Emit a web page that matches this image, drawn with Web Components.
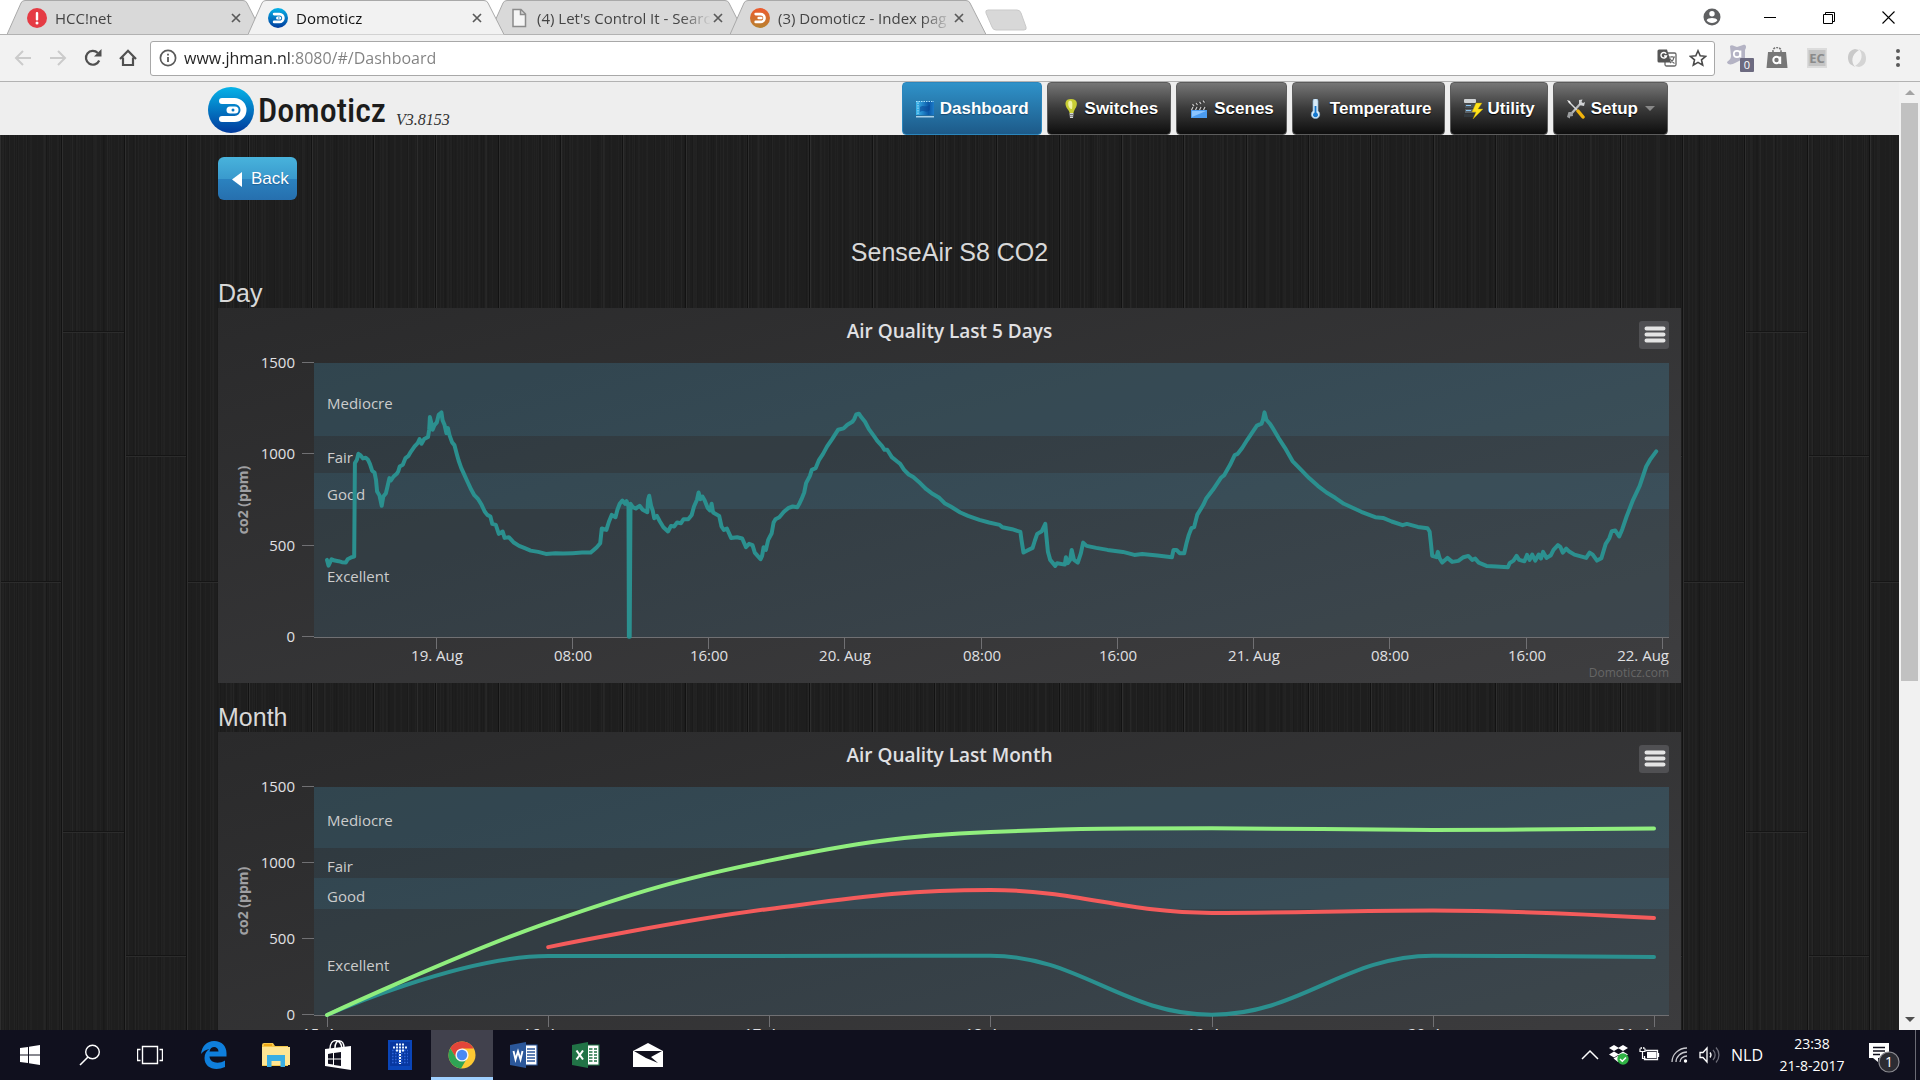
<!DOCTYPE html>
<html lang="en">
<head>
<meta charset="utf-8">
<title>Domoticz</title>
<style>
  html, body { margin: 0; height: 100%; }
  body { font-family: "Liberation Sans", Arial, sans-serif; overflow: hidden; }
</style>
</head>
<body>
<desktop-screen>
  <browser-tabs slot="window">
    <browser-tab icon="alert" label="HCC!net"></browser-tab>
    <browser-tab icon="domoticz" label="Domoticz" active></browser-tab>
    <browser-tab icon="file" label="(4) Let's Control It - Searc"></browser-tab>
    <browser-tab icon="forum" label="(3) Domoticz - Index pag"></browser-tab>
  </browser-tabs>
  <browser-toolbar slot="window" url="www.jhman.nl:8080/#/Dashboard"></browser-toolbar>
  <browser-viewport slot="window">
    <dz-header version="V3.8153">
      <dz-nav-item icon="dashboard" active>Dashboard</dz-nav-item>
      <dz-nav-item icon="bulb">Switches</dz-nav-item>
      <dz-nav-item icon="clapper">Scenes</dz-nav-item>
      <dz-nav-item icon="thermo">Temperature</dz-nav-item>
      <dz-nav-item icon="utility">Utility</dz-nav-item>
      <dz-nav-item icon="tools" menu>Setup</dz-nav-item>
    </dz-header>
    <dz-page heading="SenseAir S8 CO2">
      <dz-section heading="Day"><dz-chart series="day" heading="Air Quality Last 5 Days"></dz-chart></dz-section>
      <dz-section heading="Month"><dz-chart series="month" heading="Air Quality Last Month"></dz-chart></dz-section>
    </dz-page>
  </browser-viewport>
  <task-bar slot="taskbar"></task-bar>
</desktop-screen>

<script>
const UI = '"Open Sans", "Noto Sans", sans-serif';

const ICONS = {
  alert: [20, 20, '<circle cx="10" cy="10" r="10" fill="#e53b44"/><rect x="8.8" y="4" width="2.4" height="8.5" rx="1" fill="#fff"/><circle cx="10" cy="15" r="1.5" fill="#fff"/>'],
  domoticz: [46, 46, '<defs><linearGradient id="g" x2="0" y2="1"><stop stop-color="#06b3e8"/><stop offset="1" stop-color="#013a9c"/></linearGradient></defs><circle cx="23" cy="23" r="23" fill="url(#g)"/><path d="M15 14h9.500a9 9 0 0 1 0 18H15M12 14h6M12 32h6" transform="translate(2 0)" fill="none" stroke="#fff" stroke-width="6" stroke-linecap="round"/><path d="M22 23h5" stroke="#fff" stroke-width="7" stroke-linecap="round"/><circle cx="25" cy="23" r="1.500" fill="#0678c4"/>'],
  forum: [46, 46, '<defs><linearGradient id="g" x2="0" y2="1"><stop stop-color="#ee5a2e"/><stop offset="1" stop-color="#b7822f"/></linearGradient></defs><circle cx="23" cy="23" r="23" fill="url(#g)"/><path d="M13 14h11.500a9 9 0 0 1 0 18H13" fill="none" stroke="#fff" stroke-width="6" stroke-linecap="round"/><path d="M20 23h6" stroke="#fff" stroke-width="6" stroke-linecap="round"/>'],
  file: [20, 20, '<path d="M4 1.500h8l4.500 4.500v12.500H4zM11.500 1.500v5h5" fill="#f5f5f5" stroke="#8b8b8b" stroke-width="1.500"/>'],
  close: [10, 10, '<path d="M1 1l8 8M9 1l-8 8" stroke="#5a5a5a" stroke-width="1.700"/>'],
  user: [18, 18, '<circle cx="9" cy="9" r="8.500" fill="#5f6062"/><circle cx="9" cy="5.800" r="2.700" fill="#fff"/><path d="M3.600 12.300c1-3 9.800-3 10.800 0a6.600 6.600 0 0 1-10.800 0z" fill="#fff"/>'],
  minimize: [13, 13, '<path d="M0 6.500h12" stroke="#000"/>'],
  restore: [13, 13, '<path d="M.5 3.500h9v9h-9zM2.500 3.500v-2h9v9h-2" fill="none" stroke="#000"/>'],
  quit: [13, 13, '<path d="M.5.5l12 12M12.500.5l-12 12" stroke="#000" stroke-width="1.100"/>'],
  back: [18, 18, '<path d="M17 9H2M9 2L2 9l7 7" fill="none" stroke="#cbcbcb" stroke-width="2"/>'],
  forward: [18, 18, '<path d="M1 9h15M9 2l7 7-7 7" fill="none" stroke="#cbcbcb" stroke-width="2"/>'],
  reload: [18, 18, '<path d="M15.200 11.500A6.900 6.900 0 1 1 13.800 4" fill="none" stroke="#505050" stroke-width="2.200"/><path d="M17.500 0v7.500H10z" fill="#505050"/>'],
  home: [18, 18, '<path d="M1 10l8-8.200L17 10M4 8.500V16h10V8.500" fill="none" stroke="#505050" stroke-width="2.200"/>'],
  info: [18, 18, '<circle cx="9" cy="9" r="7.600" fill="none" stroke="#5a5a5a" stroke-width="1.700"/><path d="M9 8v5M9 4.800v1.800" stroke="#5a5a5a" stroke-width="1.800"/>'],
  translate: [20, 20, '<rect x="8" y="5" width="11" height="13" rx="1.500" fill="#fff" stroke="#666" stroke-width="1.300"/><path d="M2 1.500h8l4 13H2a1.500 1.500 0 0 1-1.500-1.500V3A1.500 1.500 0 0 1 2 1.500z" fill="#555"/><path d="M9.200 5.800A2.800 2.800 0 1 0 9.500 8H7" fill="none" stroke="#fff" stroke-width="1.400"/><path d="M12 9h6M15 8v1M17 9c-.5 3-2 5-4 6M13 10.500c1 2 2.500 4 4.500 5" fill="none" stroke="#666" stroke-width="1.100"/>'],
  star: [18, 18, '<path d="M9 1.800l2.200 5 5.400.5-4.100 3.600 1.200 5.300L9 13.400l-4.700 2.800 1.200-5.300L1.400 7.300l5.400-.5z" fill="none" stroke="#4a4a4a" stroke-width="1.600"/>'],
  avast: [28, 28, '<path d="M4 2c2-2 4 0 7 1l6-2c3-1 4 2 2 5l0 8-10 5c-3 2-8 2-8-1 2-2 4-3 4-6z" fill="#b4b3c4"/><circle cx="11" cy="10" r="3.200" fill="none" stroke="#fff" stroke-width="1.700"/><path d="M14.500 6.500v7" stroke="#fff" stroke-width="1.700"/><rect x="14" y="14" width="14" height="14" rx="1" fill="#6c6a80"/><text x="21" y="25" font-size="11" fill="#fff" text-anchor="middle">0</text>'],
  bag: [22, 22, '<path d="M2 5h18l1.500 16H.5z" fill="#777"/><path d="M7 8V3.500a4 3 0 0 1 8 0V8" fill="none" stroke="#777" stroke-width="1.600" stroke-dasharray="2 1"/><circle cx="10.500" cy="13" r="3.200" fill="none" stroke="#fff" stroke-width="2"/><path d="M14.200 9.500v7.500" stroke="#fff" stroke-width="2"/>'],
  ec: [22, 22, '<rect x="1" y="1" width="20" height="20" fill="#dcdcdc"/><rect x="2.500" y="3" width="17" height="16" fill="#c4c4c4"/><text x="11" y="16" font-size="13" font-weight="bold" fill="#8a8a8a" text-anchor="middle">EC</text>'],
  ring: [22, 22, '<path d="M9 2C2 3 0 11 4 17l5 3C5 15 5 8 13 3z" fill="#c9c9c9"/><path d="M13 20c7-1 9-9 5-15l-5-3c4 5 4 12-4 17z" fill="#d4d4d4"/>'],
  dots: [6, 20, '<g fill="#5a5a5a"><circle cx="3" cy="3" r="2"/><circle cx="3" cy="10" r="2"/><circle cx="3" cy="17" r="2"/></g>'],
  dashboard: [20, 20, '<defs><linearGradient id="g" x2="1"><stop stop-color="#3bb8ee"/><stop offset=".7" stop-color="#0b58a8"/><stop offset="1" stop-color="#1d7cc9"/></linearGradient></defs><path d="M1 2h18v14H1z" fill="url(#g)"/><path d="M3 3.500v12M1 2.500h18" stroke="#a8e2f9" stroke-dasharray="1.500 1"/><path d="M1 17h18v1.500H1z" fill="#a9cfe6"/><path d="M5 8c4-3 6 2 10-3v6c-4 4-7-1-10 2z" fill="#0a4a98" opacity=".6"/>'],
  bulb: [20, 20, '<path d="M11 0c7 0 7 6 4 10-1 2-1.500 3-1.500 4h-4c0-1-1-3-2-4C4 5 5 0 11 0z" fill="#c8ce34"/><path d="M9 2c3-1 4 1 3 8-3 1-5-6-3-8z" fill="#f0f3a2"/><path d="M9.500 14h4l-.5 5h-3z" fill="#d5d7d9"/><path d="M9.500 15.500h4M10 17.300h3" stroke="#777"/>'],
  clapper: [20, 20, '<path d="M1 6l15-5 .8 2.200L2 8z" fill="#3a3a3a"/><path d="M3.500 5.200l1.500 2M7 4l1.500 2M10.500 2.800l1.500 2M14 1.700l1.500 2" stroke="#ccc" stroke-width="1.200"/><path d="M2 8h16v3H2z" fill="#333"/><path d="M4 8l-1.500 3M8 8l-1.500 3M12 8l-1.500 3M16 8l-1.500 3" stroke="#ccc" stroke-width="1.200"/><path d="M2 11h16v8H2z" fill="#4b9cf1"/><path d="M3 12h14l-14 6z" fill="#8cc5ff"/>'],
  thermo: [20, 20, '<path d="M8 2a2.500 2.500 0 0 1 5 0v10a4.200 4.200 0 1 1-5 0z" fill="#d9ebf8" stroke="#8ab4d6" stroke-width=".7"/><path d="M9.600 7h1.800v6.500a2.500 2.500 0 1 1-1.800 0z" fill="#1277cf"/>'],
  utility: [20, 20, '<rect x="1" y="0" width="12" height="4" rx="1" fill="#cfd2d4"/><rect x="2" y="5" width="11" height="4" fill="#4a5258"/><rect x="2" y="10" width="11" height="4" fill="#5a6268"/><path d="M3 6.500h5M3 11.500h5" stroke="#8cc5f0"/><rect x="1" y="15" width="10" height="3" fill="#33393d"/><path d="M13 4h6l-4 6h5L10 20l3-7H9z" fill="#ffe21a" stroke="#b99a00" stroke-width=".4"/>'],
  tools: [20, 20, '<path d="M5 15L15 4" stroke="#b8babc" stroke-width="2.200"/><path d="M13 1v5l5 1 1-4-2 1-1.500-1 1-2.500z" fill="#d0d2d4"/><path d="M1 18l1.500-5 4 0 .5 4-3 .5v2z" fill="#9c9ea0"/><path d="M3 3l8 8" stroke="#d7d9da" stroke-width="1.500"/><path d="M1 1l3 1 1 3-2-1z" fill="#eee"/><path d="M12 12l5 6" stroke="#f2b40c" stroke-width="3.500" stroke-linecap="round"/>'],
  burger: [30, 28, '<path d="M7.500 7.500h17M7.500 13.500h17M7.500 19.500h17" stroke="#e4e4e4" stroke-width="4" stroke-linecap="round"/>'],
  windows: [20, 20, '<path d="M0 3l8-1.100V9.500H0zM9 1.700L20 0v9.500H9zM0 10.500h8v7.600L0 17zM9 10.500h11V20L9 18.300z" fill="#fff"/>'],
  search: [22, 22, '<circle cx="13.500" cy="8" r="6.800" fill="none" stroke="#fff" stroke-width="1.400"/><path d="M9 13L1 21" stroke="#fff" stroke-width="1.600"/>'],
  taskview: [26, 20, '<path d="M5.500 1.500h15v17h-15zM3.500 4.500h-3v11h3M22.500 4.500h3v11h-3" fill="none" stroke="#fff" stroke-width="1.400"/>'],
  edge: [26, 28, '<path d="M0 13C1 5 6 0 13 0c8 0 12.500 5.500 12.500 12v3.500H8.500c.5 6.500 9 8 15.500 4V26C14 30.500 3.500 27 3.500 17c0-4 2-7.500 5-9C4.500 8.500 2 10.500 0 13zm8.500-2.500h9c0-5.500-8-6.500-9 0z" fill="#0f7fdc"/>'],
  explorer: [28, 24, '<path d="M0 2a2 2 0 0 1 2-2h9l2 3h13v20H0z" fill="#f6c94b"/><path d="M0 4h28v18H0z" fill="#ffe694"/><path d="M2 1h8v2H2z" fill="#f0a818"/><path d="M5 24V12h18v12h-4.500v-6h-9v6z" fill="#3aaee3"/>'],
  store: [26, 30, '<path d="M0 9l26-3v24L0 26z" fill="#fff"/><path d="M5 9c0-11 11-11 12-1M10 8c0-10 9-9 9 0" fill="none" stroke="#fff" stroke-width="1.500"/><path d="M3 14l5-1v5.500H3zM9 13l7-1v6.500H9zM3 19.500h5v5l-5-.8zM9 19.500h7V26l-7-1z" fill="#10101e"/>'],
  tblue: [24, 30, '<rect width="24" height="30" fill="#0a45b8"/><rect x="2" y="2" width="20" height="24" fill="#0737a0"/><g fill="none" stroke="#2d63d8" stroke-width="1.600" stroke-dasharray="1.600 1.400"><path d="M4 10.500h16M4 13.500h16M4 16.500h16M4 19.500h16M4 22.500h16"/></g><g fill="none" stroke="#e7f3ff" stroke-width="2" stroke-dasharray="2 1"><path d="M8 4.500h8M5 7.500h14M8 10.500h8M12 11v13"/></g>'],
  chrome: [28, 28, '<circle cx="14" cy="14" r="13.500" fill="#fdc933"/><path d="M2.300 7.200A13.500 13.500 0 0 1 25.700 7.500H14L8 17z" fill="#e2453a"/><path d="M2.300 7.200L8.500 17.500 18 19l-5 8.500A13.500 13.500 0 0 1 2.300 7.200z" fill="#2fa455"/><circle cx="14" cy="14" r="6.600" fill="#f4f4f4"/><circle cx="14" cy="14" r="5.200" fill="#4a89f3"/>'],
  word: [28, 26, '<path d="M15 3h12v20H15z" fill="#fff" stroke="#2b579a" stroke-width="1.200"/><path d="M17 7h8M17 10h8M17 13h8M17 16h8M17 19h8" stroke="#2b579a" stroke-width="1.500"/><path d="M0 3l16-3v26L0 23z" fill="#2b579a"/><path d="M3.500 9l2 8.500L8 9.500l2.500 8 2-8.500" fill="none" stroke="#fff" stroke-width="1.900"/>'],
  excel: [28, 26, '<path d="M15 3h12v20H15z" fill="#fff" stroke="#217346" stroke-width="1.200"/><path d="M17 7h3.500M22 7h3M17 10h3.500M22 10h3M17 13h3.500M22 13h3M17 16h3.500M22 16h3M17 19h3.500M22 19h3" stroke="#217346" stroke-width="1.700"/><path d="M0 3l16-3v26L0 23z" fill="#217346"/><path d="M4.500 8.500l6.500 9M11 8.500l-6.500 9" stroke="#fff" stroke-width="2.100"/>'],
  mail: [30, 24, '<path d="M15 0l15 8v16H0V8z" fill="#fff"/><path d="M1 8h28l-11 6 7 6-12-5z" fill="#10101e"/>'],
  chevron: [18, 12, '<path d="M1 10l8-8 8 8" fill="none" stroke="#fff" stroke-width="1.500"/>'],
  dropbox: [20, 20, '<path d="M5 0l5 3-5 3-5-3zM14 0l5 3-5 3-5-3zM5 6.500l5 3-5 3-5-3zM14 6.500l5 3-5 3-5-3zM4.500 13.500l5-3 4 3-4.500 3.500z" fill="#fff"/><circle cx="14" cy="14" r="5.700" fill="#2fb344"/><path d="M11 14l2.300 2.300L17 12.500" fill="none" stroke="#fff" stroke-width="1.500"/>'],
  battery: [22, 16, '<path d="M6.500 3.500h12v9H5.500V9M19.500 6v4" fill="none" stroke="#fff" stroke-width="1.300"/><path d="M8 5h9.500v6H8z" fill="#fff"/><path d="M1 1.500v3h5v-3M2.200 0v2M4.800 0v2M3.500 5v6.500h3" fill="none" stroke="#fff" stroke-width="1.200"/>'],
  wifi: [18, 16, '<g fill="none" stroke="#c9c9ce" stroke-width="1.300"><path d="M1 15A15 14 0 0 1 16 1"/><path d="M5 15A11 10 0 0 1 16 5"/><path d="M9 15a7 6 0 0 1 7-6"/></g><circle cx="14.500" cy="14" r="1.700" fill="#fff"/>'],
  volume: [22, 18, '<path d="M1 6.500h3l4-4.500v14l-4-4.500H1z" fill="none" stroke="#fff" stroke-width="1.300"/><path d="M11 6.500a4 4 0 0 1 0 5" fill="none" stroke="#fff" stroke-width="1.300"/><path d="M14 4a7 7 0 0 1 0 10M17 1.500a11 11 0 0 1 0 15" fill="none" stroke="#6d6d78" stroke-width="1.300"/>'],
  action: [34, 34, '<path d="M2 3h20v15H11v4l-5-4H2z" fill="#fff"/><path d="M6 7.500h12M6 11h12M6 14.500h7" stroke="#10101e" stroke-width="1.400"/><circle cx="22" cy="22" r="10" fill="#2c2c33" stroke="#8a8a90" stroke-width="1.200"/><text x="22" y="27" font-size="14" fill="#fff" text-anchor="middle">1</text>'],
  triangle: [10, 15, '<path d="M10 0v15L0 7.500z" fill="#fff"/>'],
};

function define(name, css, body) {
  customElements.define(name, class extends HTMLElement {
    connectedCallback() {
      if (this.shadowRoot) return;
      const root = this.attachShadow({ mode: 'open' });
      const tpl = document.createElement('template');
      tpl.innerHTML = `<style>*{box-sizing:border-box}${css}</style>${body(this)}`;
      root.append(tpl.content.cloneNode(true));
    }
  });
}

define('ui-icon',
  ':host{display:inline-flex;flex:none} svg{display:block;font-family:"Open Sans",sans-serif}',
  el => {
    const [w, h, art] = ICONS[el.getAttribute('name')];
    const size = Number(el.getAttribute('size')) || w;
    return `<svg width="${size}" height="${Math.round(h * size / w)}" viewBox="0 0 ${w} ${h}" aria-hidden="true">${art}</svg>`;
  });

define('desktop-screen',
  ':host{display:flex;flex-direction:column;height:100vh;overflow:hidden;background:#fff} .window{display:flex;flex-direction:column;flex:1;min-height:0}',
  () => '<div class="window"><slot name="window"></slot></div><slot name="taskbar"></slot>');

/* ---- browser ---- */
define('browser-tabs', `
  :host{display:flex;height:35px;background:#fff;padding-left:7px;position:relative;align-items:flex-start}
  :host::after{content:"";position:absolute;left:0;right:0;bottom:0;height:1px;background:#b2b2b2}
  .new{width:44px;height:22px;margin:9px 0 0 13px;padding:0;border:0;background:none}
  .new svg{display:block}
  .controls{margin-left:auto;display:flex;height:34px;align-items:center;margin-right:25px;gap:46px}
  .controls button{border:0;background:none;padding:0;display:flex;width:13px;justify-content:center}
`, () => `<slot></slot>
  <button class="new" aria-label="New tab"><svg width="44" height="22"><path d="M4 1h29q3 0 4 3l5 14q1 3-2 3H12q-3 0-4-3L2 4q-1-3 2-3z" fill="#d8d8d8" stroke="#c9c9c9"/></svg></button>
  <div class="controls">
    <button aria-label="User"><ui-icon name="user"></ui-icon></button>
    <button aria-label="Minimize"><ui-icon name="minimize"></ui-icon></button>
    <button aria-label="Restore"><ui-icon name="restore"></ui-icon></button>
    <button aria-label="Close window"><ui-icon name="quit"></ui-icon></button>
  </div>`);

define('browser-tab', `
  :host{display:block;position:relative;flex:0 1 256px;min-width:0;height:35px;margin-right:-15px}
  :host([active]){z-index:2}
  .shape{position:absolute;inset:0;width:100%;height:100%}
  .shape path{fill:#d9d9d9;stroke:#a9a9a9;vector-effect:non-scaling-stroke}
  :host([active]) .shape path{fill:#f2f2f2}
  .row{position:relative;display:flex;align-items:center;height:36px;padding:0 22px 0 20px;gap:8px}
  .title{flex:1;min-width:0;border:0;background:none;padding:0;margin-right:-6px;text-align:left;font:15px/20px ${UI};color:#444;white-space:nowrap;overflow:hidden;
    -webkit-mask-image:linear-gradient(90deg,#000 calc(100% - 30px),transparent);mask-image:linear-gradient(90deg,#000 calc(100% - 30px),transparent)}
  :host([active]) .title{color:#111}
  .x{border:0;background:none;padding:0;display:flex}
`, el => `<svg class="shape" viewBox="0 0 256 35" preserveAspectRatio="none"><path d="M0 34.500L14 3Q15 .5 18 .5H236Q239 .5 240 3L256 34.500"/></svg>
  <div class="row"><ui-icon name="${el.getAttribute('icon')}" size="20"></ui-icon>
  <button class="title" role="tab">${el.getAttribute('label')}</button>
  <button class="x" aria-label="Close tab"><ui-icon name="close"></ui-icon></button></div>`);

define('browser-toolbar', `
  :host{display:flex;align-items:center;height:46px;background:#f2f2f2;border-bottom:1px solid #b2b2b2;padding:0 19px 0 14px}
  button{border:0;background:none;padding:0;display:flex}
  .nav{display:flex;gap:17px;margin-right:13px}
  .address{flex:1;height:35px;display:flex;align-items:center;gap:7px;padding:0 7px 0 8px;background:#fff;border:1px solid #a8a8a8;border-radius:3px}
  input{flex:1;min-width:0;border:0;outline:0;padding:0;font:16px/24px ${UI};color:transparent;
    background:linear-gradient(90deg,#222 107px,#808080 107px);-webkit-background-clip:text;background-clip:text}
  .end{display:flex;gap:12px;align-items:center}
  .ext{display:flex;align-items:center;gap:18px;margin-left:11px}
  .ext button:first-child{margin-right:-6px}
  .ext button:last-child{margin-left:9px}
`, el => `<div class="nav">${['back', 'forward', 'reload', 'home'].map(n => `<button aria-label="${n}"><ui-icon name="${n}"></ui-icon></button>`).join('')}</div>
  <div class="address"><ui-icon name="info"></ui-icon><input aria-label="Address" value="${el.getAttribute('url')}">
  <div class="end"><button aria-label="Translate"><ui-icon name="translate"></ui-icon></button><button aria-label="Bookmark"><ui-icon name="star"></ui-icon></button></div></div>
  <div class="ext">${['avast', 'bag', 'ec', 'ring', 'dots'].map(n => `<button aria-label="${n}"><ui-icon name="${n}"></ui-icon></button>`).join('')}</div>`);

define('browser-viewport', `
  :host{display:flex;flex:1;min-height:0}
  .page{flex:1;min-width:0;overflow:hidden;display:flex;flex-direction:column}
  .bar{width:21px;background:#f1f1f1;display:flex;flex-direction:column;align-items:center;padding:8px 0}
  .up,.down{border:5px solid transparent;width:0;height:0}
  .up{border-bottom-color:#a3a3a3;border-top:0}
  .down{border-top-color:#505050;border-bottom:0;margin-top:auto}
  .thumb{width:17px;height:62%;margin-top:8px;background:#c1c1c1}
`, () => '<div class="page"><slot></slot></div><div class="bar"><i class="up"></i><i class="thumb"></i><i class="down"></i></div>');

/* ---- Domoticz ---- */
define('dz-header', `
  :host{display:block;background:#eee;flex:none}
  .inner{display:flex;height:53px;max-width:1483px;margin:0 auto;padding-right:23px;align-items:center}
  .brand{display:flex;align-items:center;gap:4px;color:#1c1c1c;text-decoration:none;padding-top:2px}
  .name{font:500 34px/46px "Roboto Condensed","Liberation Sans Narrow","Open Sans Condensed","DejaVu Sans Condensed",sans-serif}
  .version{align-self:flex-end;padding-bottom:5px;margin-left:10px;font:italic 16px/20px "Liberation Serif",serif;color:#333}
  nav{display:flex;gap:5px;margin-left:auto;height:100%}
`, el => `<div class="inner"><a class="brand" href="#/"><ui-icon name="domoticz"></ui-icon><span class="name">Domoticz</span></a>
  <span class="version">${el.getAttribute('version')}</span><nav><slot></slot></nav></div>`);

define('dz-nav-item', `
  :host{display:flex}
  a{display:flex;align-items:center;gap:5px;padding:0 12px;border:1px solid #5c5c5c;border-radius:4px;text-decoration:none;color:#fff;
    font-weight:bold;font-size:17px;line-height:20px;text-shadow:0 1px 1px #000;background:linear-gradient(#767676,#3a3a3a 50%,#0e0e0e)}
  :host([active]) a{background:linear-gradient(#2f92c9,#1d5a89);border-color:#2b86bd;text-shadow:0 1px 1px #164a70}
  .caret{border:5px solid transparent;border-top-color:#888;border-bottom:0;margin-left:2px}
`, el => `<a href="#/"><ui-icon name="${el.getAttribute('icon')}"></ui-icon><slot></slot>${el.hasAttribute('menu') ? '<i class="caret"></i>' : ''}</a>`);

/* Dark boards 62px wide, three to a tile, with fine vertical grain */
function planks() {
  const strip = (period, offset, color) =>
    `repeating-linear-gradient(90deg,transparent 0 ${offset}px,${color} ${offset}px ${offset + 1}px,transparent ${offset + 1}px ${period}px)`;
  const light = [[7, 2, .015], [13, 5, .02], [17, 9, .02], [23, 3, .025], [31, 14, .025]].map(([p, o, a]) => strip(p, o, `rgba(255,255,255,${a})`));
  const dark = [[11, 4, .08], [19, 8, .1], [29, 17, .1]].map(([p, o, a]) => strip(p, o, `rgba(0,0,0,${a})`));
  const seams = [[0, '#2e2e2e'], [62, '#2e2e2e'], [125, '#2e2e2e'], [61, '#121212'], [124, '#121212'], [186, '#121212']].map(([o, c]) => strip(187, o, c));
  return [...seams, ...light, ...dark, '#1e1e1e'].join(',');
}

define('dz-page', `
  :host{display:block;flex:1;min-height:0;overflow:hidden;position:relative;background:${planks()}}
  .joints{position:absolute;inset:0;width:100%;height:100%}
  main{position:relative;max-width:1463px;margin:0 auto;padding:22px 0 40px;color:#d8d8d8}
  .back{display:flex;align-items:center;gap:9px;height:43px;padding:0 8px 0 14px;border:0;border-radius:6px;color:#fff;font:17px/20px "Liberation Sans",sans-serif;
    text-shadow:0 1px 1px #1b5f94;background:linear-gradient(#48b3dc,#3a9acd 50%,#2b82bf 52%,#266fae)}
  .back ui-icon{padding-top:2px}
  h1{margin:37px 0 12px;font-weight:normal;font-size:25px;line-height:30px;text-align:center}
`, el => `<svg class="joints" aria-hidden="true"><defs><pattern id="j" width="187" height="500" patternUnits="userSpaceOnUse">
    <path d="M1 447.500h60M63 197.500h61M126 321.500h60" stroke="#2c2c2c"/><path d="M1 446.500h60M63 196.500h61M126 320.500h60" stroke="#151515"/></pattern></defs>
    <rect width="100%" height="100%" fill="url(#j)"/></svg>
  <main><button class="back"><ui-icon name="triangle"></ui-icon>Back</button><h1>${el.getAttribute('heading')}</h1><slot></slot></main>`);

define('dz-section', ':host{display:block;margin-bottom:20px} h2{margin:0;font-weight:normal;font-size:25px;line-height:29px}',
  el => `<h2>${el.getAttribute('heading')}</h2><slot></slot>`);

/* CO2 log: blocks of samples, [x offset, x scale, y offset] applied to every x,y pair */
const LOG = [
  [0, 1, 0, '333,780 337,797 345,778 353,782 363,784 372,787 382,788 387,778 397,772 404,770 406,490 411,480 415,462 420,466 427,476 434,474 440,480 445,492 451,513 457,518 461,540 464,575 470,586 476,618 480,590 487,580 491,560 496,535 500,542 507,530 515,522 519,515 523,500 531,495 538,475 546,468 552,456 562,440 570,430 575,418 580,432 587,418 597,412 600,390 602,352 606,372 609,390 614,376 620,368 625,345 632,338 635,362 640,375 645,400 649,385 653,406 660,428 666,436 672,462 677,482 684,505 690,520 700,545 710,570 718,586 728,598 737,615 745,635 752,645 760,650 765,672 774,675 782,702 792,695 797,714 808,712 820,727 835,738 850,745 865,752 885,756 905,762 930,760 950,761 975,760 1000,758 1022,758 1030,750 1038,742 1047,730 1051,686 1063,690 1070,665 1077,645 1087,652 1092,630 1098,612 1105,602 1112,612 1116,604 1121,620 1122,1010 1124,1010 1126,612 1132,622 1140,626 1150,618 1158,630 1170,637 1172,600 1175,588 1180,618 1184,632 1188,655 1195,648 1203,665 1212,682 1224,695 1232,678 1240,680 1248,668 1258,670 1265,658 1277,658 1286,645 1292,620 1300,600 1304,578 1309,598 1314,590 1320,602 1328,625 1334,632 1338,612 1342,638 1358,648 1364,680 1370,690 1378,686 1389,714 1405,712 1418,716 1428,742 1436,732 1445,736 1451,758 1460,770 1466,778 1470,768 1474,742 1480,750 1486,720 1495,700 1500,668 1505,658 1515,652 1527,636 1538,625 1550,620 1562,622 1568,610'],
  [1463, 1, -240, '110,838 117,818 122,790 132,768 137,750 147,745 156,720 166,703 177,680 190,658 206,630 220,626 230,615 243,606 248,598 253,584 260,582 266,592 276,606 286,628 300,650 308,663 320,678 327,690 334,690 346,712 360,725 368,732 378,750 390,764 402,772 420,790 436,808 450,820 470,834 484,850 500,860 525,878 545,888 575,900 600,908 628,915 635,922 660,928 682,936 685,960 690,998 700,992 714,984 720,962 726,942 738,934 747,912 750,950 754,995 760,1020 773,1038 778,1030 798,1034 801,1012 806,1030 812,1020 816,990 822,1020 832,1028 840,1000 846,968 855,978 880,984 910,990 950,996 980,1005 1000,1002 1040,1007 1078,1012 1082,990 1090,990 1098,1000 1110,1000 1116,970 1122,945 1129,925 1136,922 1144,885 1160,855 1168,835 1185,810 1206,774 1215,766 1230,735 1242,706 1250,702 1262,684 1275,660 1290,635 1300,618 1312,612 1316,600 1320,578 1325,600 1334,612'],
  [2717.5, 1.1368, 0, '75,382 90,415 105,445 122,484 140,508 160,535 180,558 200,578 220,594 240,612 260,624 280,636 312,652 330,654 350,665 375,676 385,672 410,681 432,685 437,695 440,730 443,768 453,772 456,756 460,775 466,788 478,774 489,786 503,783 515,772 526,768 535,780 542,776 550,788 568,798 590,800 617,802 621,790 630,782 637,768 643,780 655,784 661,765 667,780 673,764 680,782 688,764 693,776 698,756 706,774 716,766 722,750 732,736 738,742 743,758 751,746 757,754 770,764 797,774 805,758 812,764 822,782 832,775 842,732 850,716 856,694 864,692 873,710 880,688 890,650 905,600 920,558 935,500 945,478 958,455'],
];
const dayPoints = LOG.flatMap(([ox, sx, oy, s]) => s.split(' ').map(p => {
  const [x, y] = p.split(',').map(Number);
  return [(ox + x * sx - 299) / 3541, (1011 - y - oy) / 821 * 1500];
}));
const monthX = i => (13 + i * 221) / 1354;
const monthSeries = (values, from = 0) => values.map((v, i) => [monthX(i + from), v]);

const CHARTS = {
  day: {
    plotHeight: 274,
    ticks: ['19. Aug', '08:00', '16:00', '20. Aug', '08:00', '16:00', '21. Aug', '08:00', '16:00', '22. Aug'].map((t, i) => [(121.5 + i * 136.15) / 1354, t]),
    lines: [{ color: '#2b908f', points: dayPoints }],
    credit: 'Domoticz.com',
  },
  month: {
    plotHeight: 228,
    ticks: ['15. Aug', '16. Aug', '17. Aug', '18. Aug', '19. Aug', '20. Aug', '21. Aug'].map((t, i) => [monthX(i), t]),
    lines: [
      { color: '#2b908f', smooth: true, points: monthSeries([0, 388, 388, 390, 2, 390, 381]) },
      { color: '#90ee7e', smooth: true, points: monthSeries([0, 608, 1016, 1203, 1228, 1218, 1227]) },
      { color: '#f45b5b', smooth: true, points: monthSeries([447, 698, 822, 672, 687, 638], 1) },
    ],
  },
};

function spline(pts) {
  let d = `M${pts[0]}`, prev = pts[0];
  for (let i = 1; i < pts.length; i++) {
    const [x, y] = pts[i], [lx, ly] = pts[i - 1], next = pts[i + 1];
    let left = pts[i], right = pts[i];
    if (next) {
      const [nx, ny] = next;
      const lcx = (1.5 * x + lx) / 2.5, rcx = (1.5 * x + nx) / 2.5;
      let lcy = (1.5 * y + ly) / 2.5, rcy = (1.5 * y + ny) / 2.5;
      const fix = (rcy - lcy) * (rcx - x) / (rcx - lcx) + y - rcy;
      lcy += fix; rcy += fix;
      if (lcy > ly && lcy > y) { lcy = Math.max(ly, y); rcy = 2 * y - lcy; }
      else if (lcy < ly && lcy < y) { lcy = Math.min(ly, y); rcy = 2 * y - lcy; }
      if (rcy > ny && rcy > y) { rcy = Math.max(ny, y); lcy = 2 * y - rcy; }
      else if (rcy < ny && rcy < y) { rcy = Math.min(ny, y); lcy = 2 * y - rcy; }
      left = [lcx, lcy]; right = [rcx, rcy];
    }
    d += `C${prev} ${left} ${pts[i]}`;
    prev = right;
  }
  return d;
}

customElements.define('dz-chart', class extends HTMLElement {
  connectedCallback() {
    if (this.shadowRoot) return;
    this.attachShadow({ mode: 'open' }).innerHTML = `<style>
      :host{display:block;position:relative;height:375px;background:linear-gradient(165deg,#2a2a2b,#3e3e40)}
      svg{display:block;width:100%;height:100%;font-family:"Open Sans","Noto Sans",sans-serif}
      .tick{font-size:15px;fill:#e0e0e3} .band{font-size:15px;fill:#ccc}
      .title{font-size:19px;font-weight:600;fill:#e0e0e3} .axis{font-size:14px;font-weight:bold;fill:#a0a0a3} .credit{font-size:12px;fill:#666}
      button{position:absolute;top:13px;right:12px;width:30px;height:28px;padding:0;border:0;border-radius:3px;background:#505053}
    </style><svg></svg><button aria-label="Chart menu"><ui-icon name="burger"></ui-icon></button>`;
    this.draw();
    new ResizeObserver(() => this.draw()).observe(this);
  }
  draw() {
    const chart = CHARTS[this.getAttribute('series')];
    const W = this.clientWidth, L = 96, R = W - 12, T = 55, B = T + chart.plotHeight;
    const X = f => L + f * (R - L), Y = v => B - v / 1500 * (B - T);
    const row = v => Math.round(Y(v));
    const bands = [[0, 700, .1, 'Excellent'], [700, 900, .2, 'Good'], [900, 1100, .1, 'Fair'], [1100, 1500, .2, 'Mediocre']];
    let art = '';
    for (const [a, b, o] of bands) {
      art += `<rect x="${L}" y="${row(b)}" width="${R - L}" height="${row(a) - row(b)}" fill="rgba(68,170,213,${o})"/>`;
    }
    for (const [a, b, , name] of bands) {
      art += `<text class="band" x="${L + 13}" y="${Math.round(Y((a + b) / 2)) + 9}">${name}</text>`;
    }
    for (const v of [0, 500, 1000, 1500]) {
      art += `<path d="M${L - 12} ${row(v) - .5}H${L}" stroke="#707073"/>`;
      art += `<text class="tick" x="${L - 19}" y="${row(v) + 5}" text-anchor="end">${v}</text>`;
    }
    art += `<path d="M${L} ${B + .5}H${R}" stroke="#707073"/>`;
    for (const [f, t] of chart.ticks) {
      const x = Math.round(X(f));
      const atEdge = x + 26 > R;
      art += `<path d="M${x + .5} ${B}v12" stroke="#707073"/>`;
      art += `<text class="tick" x="${atEdge ? R : x + 1}" y="${B + 24}" text-anchor="${atEdge ? 'end' : 'middle'}">${t}</text>`;
    }
    for (const line of chart.lines) {
      const pts = line.points.map(([f, v]) => [X(f).toFixed(1) * 1, Y(v).toFixed(1) * 1]);
      art += `<path d="${line.smooth ? spline(pts) : 'M' + pts.join('L')}" fill="none" stroke="${line.color}" stroke-width="4" stroke-linejoin="round" stroke-linecap="round"/>`;
    }
    art += `<text class="title" x="${W / 2}" y="30" text-anchor="middle">${this.getAttribute('heading')}</text>`;
    art += `<text class="axis" transform="translate(30 ${(T + B) / 2}) rotate(-90)" text-anchor="middle">co2 (ppm)</text>`;
    if (chart.credit) art += `<text class="credit" x="${R}" y="369" text-anchor="end">${chart.credit}</text>`;
    this.shadowRoot.querySelector('svg').innerHTML = art;
  }
});

/* ---- Windows task bar ---- */
define('task-bar', `
  :host{display:flex;height:50px;background:#10101e;color:#fff;font-family:${UI}}
  button{border:0;padding:0;background:none;color:inherit;font:inherit;display:flex;align-items:center;justify-content:center}
  .system,.apps{display:flex}
  .system button{width:60px}
  .apps{margin-left:3px} .apps button{width:62px}
  .apps .open{background:#41414d;border-bottom:3px solid #9fd0ff;padding-top:3px}
  .tray{display:flex;margin-left:auto;align-items:center;gap:10px;border-right:1px solid #6b6b75;margin-right:4px}
  .lang{font-size:16px;line-height:20px;margin:0 3px 0 0}
  .clock{flex-direction:column;font-size:14px;line-height:22px;width:72px}
  .note{margin:4px 14px 0 0;width:43px;padding-left:9px}
`, () => {
  const btn = (n, c = '') => `<button ${c} aria-label="${n}"><ui-icon name="${n}"></ui-icon></button>`;
  return `<div class="system">${['windows', 'search', 'taskview'].map(n => btn(n)).join('')}</div>
  <div class="apps">${['edge', 'explorer', 'store', 'tblue', 'chrome', 'word', 'excel', 'mail'].map(n => btn(n, n === 'chrome' ? 'class="open"' : '')).join('')}</div>
  <div class="tray">${['chevron', 'dropbox', 'battery', 'wifi', 'volume'].map(n => btn(n)).join('')}
  <button class="lang">NLD</button><button class="clock"><span>23:38</span><span>21-8-2017</span></button>${btn('action', 'class="note"')}</div>`;
});
</script>
</body>
</html>
